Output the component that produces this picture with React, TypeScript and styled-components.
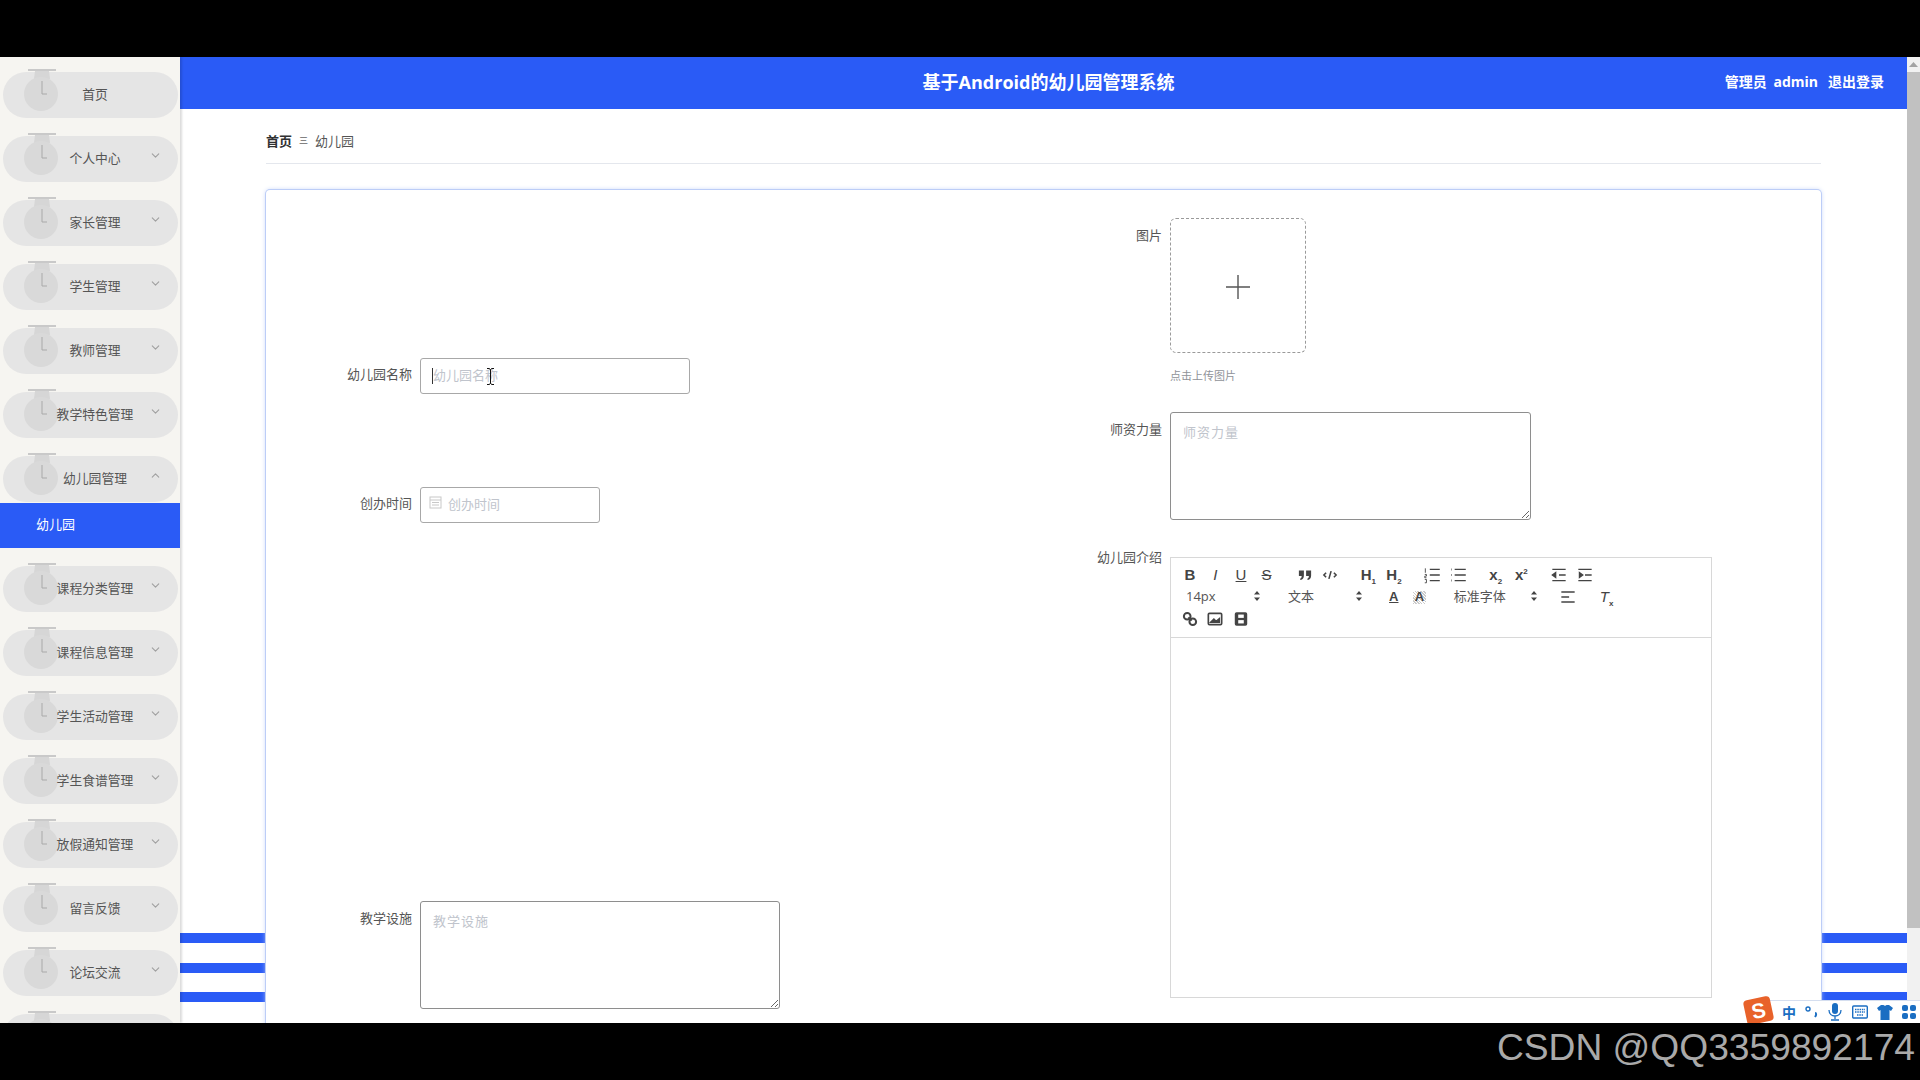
import React from 'react'
import styled, { createGlobalStyle } from 'styled-components'
import { ChevronDown, ChevronUp } from 'lucide-react'

const BLUE = '#2a5bf6'
const FONT = '"Open Sans", "Noto Sans CJK SC", sans-serif'

const menus = [
  { id: 'home', name: '首页', plain: true },
  { id: 'center', name: '个人中心' },
  { id: 'parent', name: '家长管理' },
  { id: 'student', name: '学生管理' },
  { id: 'teacher', name: '教师管理' },
  { id: 'feature', name: '教学特色管理' },
  { id: 'school', name: '幼儿园管理', open: true, sub: '幼儿园' },
  { id: 'category', name: '课程分类管理' },
  { id: 'course', name: '课程信息管理' },
  { id: 'activity', name: '学生活动管理' },
  { id: 'recipe', name: '学生食谱管理' },
  { id: 'holiday', name: '放假通知管理' },
  { id: 'message', name: '留言反馈' },
  { id: 'forum', name: '论坛交流' },
  { id: 'last', name: '', plain: true },
]

function MenuIcon() {
  return (
    <PillIcon width="36" height="46" viewBox="0 0 36 46">
      <rect x="4" y="1" width="28" height="2" fill="#c9c9c9" />
      <path d="M11 3h14l1 8H10z" fill="#d6d6d6" />
      <circle cx="17" cy="26" r="17" fill="#d9d9d9" />
      <path d="M18 13v13h5" fill="none" stroke="#a9a9a9" strokeWidth="1" />
    </PillIcon>
  )
}

function Arrows() {
  return (
    <svg width="6" height="10" viewBox="0 0 6 10">
      <path d="M3 0l3 3.600H0zM3 10L0 6.400h6z" fill="#444" />
    </svg>
  )
}

function ToolSvg({ children }: { children: React.ReactNode }) {
  return (
    <ToolIcon width="20" height="20" viewBox="0 0 18 18">
      {children}
    </ToolIcon>
  )
}

const Quote = () => (
  <ToolSvg>
    <path d="M3.500 5H8v4.500C8 12 7 13 5 13.600l-.5-1C5.600 12 6 11.300 6 10H3.500zM10 5h4.500v4.500c0 2.500-1 3.500-3 4.100l-.5-1c1.100-.6 1.500-1.300 1.500-2.600H10z" fill="#444" stroke="none" />
  </ToolSvg>
)
const Code = () => (
  <ToolSvg>
    <path d="M5.500 7L3.500 9l2 2M12.500 7l2 2-2 2M10 5.500L8 12.500" strokeWidth="1.400" />
  </ToolSvg>
)
const Ordered = () => (
  <ToolSvg>
    <path d="M7 4h9M7 9h9M7 14h9" />
    <path d="M3 3v4M2.500 8.500h1.500v1.500H2.500v1.500H4M2.500 13h1.500v3H2.500" strokeWidth="0.800" />
  </ToolSvg>
)
const Bullet = () => (
  <ToolSvg>
    <path d="M6 4h10M6 9h10M6 14h10" />
    <path d="M3 4h.5M3 9h.5M3 14h.5" strokeWidth="1.800" />
  </ToolSvg>
)
const Outdent = () => (
  <ToolSvg>
    <path d="M3 4h12M9 9h6M3 14h12" />
    <path d="M3 9l3-2.200v4.400z" fill="#444" />
  </ToolSvg>
)
const Indent = () => (
  <ToolSvg>
    <path d="M3 4h12M9 9h6M3 14h12" />
    <path d="M7 9L4 6.800v4.400z" fill="#444" />
  </ToolSvg>
)
const Align = () => (
  <ToolSvg>
    <path d="M3 4.500h12M3 9h7M3 13.500h12" strokeWidth="1.500" />
  </ToolSvg>
)
const Link = () => (
  <ToolSvg>
    <circle cx="6.500" cy="6.500" r="3" strokeWidth="1.800" />
    <circle cx="11.500" cy="11.500" r="3" strokeWidth="1.800" />
    <path d="M7.500 7.500l3 3" strokeWidth="1.800" />
  </ToolSvg>
)
const Picture = () => (
  <ToolSvg>
    <rect x="3" y="4" width="12" height="10" rx="1" strokeWidth="1.500" />
    <path d="M5 12l3-3 2 2 3-2.500V12z" fill="#444" />
  </ToolSvg>
)
const Video = () => (
  <ToolSvg>
    <rect x="4" y="3.500" width="10" height="11" rx="1" fill="#444" />
    <rect x="6.500" y="5" width="5" height="3" fill="#fff" stroke="none" />
    <rect x="6.500" y="10" width="5" height="3" fill="#fff" stroke="none" />
  </ToolSvg>
)

function Editor() {
  return (
    <EditorBox>
      <Toolbar>
        <ToolGroup>
          <ToolLetter $bold>B</ToolLetter>
          <ToolLetter $italic>I</ToolLetter>
          <ToolLetter $under>U</ToolLetter>
          <ToolLetter $strike>S</ToolLetter>
        </ToolGroup>
        <ToolGroup>
          <ToolButton><Quote /></ToolButton>
          <ToolButton><Code /></ToolButton>
        </ToolGroup>
        <ToolGroup>
          <ToolLetter $bold>H<sub>1</sub></ToolLetter>
          <ToolLetter $bold>H<sub>2</sub></ToolLetter>
        </ToolGroup>
        <ToolGroup>
          <ToolButton><Ordered /></ToolButton>
          <ToolButton><Bullet /></ToolButton>
        </ToolGroup>
        <ToolGroup>
          <ToolLetter $bold>x<sub>2</sub></ToolLetter>
          <ToolLetter $bold>x<sup>2</sup></ToolLetter>
        </ToolGroup>
        <ToolGroup>
          <ToolButton><Outdent /></ToolButton>
          <ToolButton><Indent /></ToolButton>
        </ToolGroup>
        <RowBreak />
        <ToolSelect $width={93}>14px<Arrows /></ToolSelect>
        <ToolSelect $width={93}>文本<Arrows /></ToolSelect>
        <ToolGroup>
          <ToolLetter $small $under>A</ToolLetter>
          <ToolLetter $small $hatch>A</ToolLetter>
        </ToolGroup>
        <ToolSelect $width={102}>标准字体<Arrows /></ToolSelect>
        <ToolGroup>
          <ToolButton><Align /></ToolButton>
        </ToolGroup>
        <ToolGroup>
          <ToolLetter $clean>T<sub>x</sub></ToolLetter>
        </ToolGroup>
        <RowBreak />
        <ToolGroup>
          <ToolButton><Link /></ToolButton>
          <ToolButton><Picture /></ToolButton>
          <ToolButton><Video /></ToolButton>
        </ToolGroup>
      </Toolbar>
    </EditorBox>
  )
}

export default function App() {
  return (
    <>
      <GlobalStyle />
      <Frame>
        <BlackBar />
        <Body>
          <Sidebar>
            {menus.map((menu) => (
              <React.Fragment key={menu.id}>
                <Pill $open={menu.open}>
                  <MenuIcon />
                  <PillText>{menu.name}</PillText>
                  {!menu.plain && <PillArrow>{menu.open ? <ChevronUp size={13} /> : <ChevronDown size={13} />}</PillArrow>}
                </Pill>
                {menu.sub && <SubItem>{menu.sub}</SubItem>}
              </React.Fragment>
            ))}
          </Sidebar>
          <Main>
            <Header>
              <Title>基于Android的幼儿园管理系统</Title>
              <HeaderRight>
                <span>管理员 admin</span>
                <span>退出登录</span>
              </HeaderRight>
            </Header>
            <Content>
              <Breadcrumb>
                <strong>首页</strong>
                <Separator>三</Separator>
                <span>幼儿园</span>
              </Breadcrumb>
              <Card>
                <Column>
                  <Row $top={168}>
                    <Label $center>幼儿园名称</Label>
                    <InputWrap>
                      <TextInput $width={270} placeholder="幼儿园名称" />
                      <Caret />
                      <IBeam width="9" height="17" viewBox="0 0 9 17">
                        <path d="M1 .5h2.500L4.500 2 5.500.5H8M4.500 2v13M1 16.500h2.500L4.500 15l1 1.500H8" fill="none" stroke="#111" />
                      </IBeam>
                    </InputWrap>
                  </Row>
                  <Row $top={93}>
                    <Label $center>创办时间</Label>
                    <InputWrap>
                      <DateInput placeholder="创办时间" />
                      <CalendarIcon width="13" height="13" viewBox="0 0 13 13">
                        <rect x="1" y="1" width="11" height="11" fill="none" stroke="#c8c8c8" />
                        <path d="M1 4h11M3 6.500h7M3 9h7" stroke="#c8c8c8" />
                      </CalendarIcon>
                    </InputWrap>
                  </Row>
                  <Row $top={378}>
                    <Label>教学设施</Label>
                    <TextArea $width={360} placeholder="教学设施" />
                  </Row>
                </Column>
                <Column>
                  <Row $top={28}>
                    <Label>图片</Label>
                    <div>
                      <Upload>
                        <svg width="24" height="24" viewBox="0 0 24 24">
                          <path d="M0 12h24M12 0v24" stroke="#555" strokeWidth="1.400" />
                        </svg>
                      </Upload>
                      <UploadHint>点击上传图片</UploadHint>
                    </div>
                  </Row>
                  <Row $top={27}>
                    <Label>师资力量</Label>
                    <TextArea $width={361} placeholder="师资力量" />
                  </Row>
                  <Row $top={37}>
                    <Label $raised>幼儿园介绍</Label>
                    <Editor />
                  </Row>
                </Column>
              </Card>
            </Content>
          </Main>
          <Scrollbar>
            <ScrollButton>
              <svg width="9" height="5" viewBox="0 0 9 5">
                <path d="M4.500 0L9 5H0z" fill="#a3a3a3" />
              </svg>
            </ScrollButton>
            <ScrollThumb />
          </Scrollbar>
          <ImeBar>
            <ImeLogo>S</ImeLogo>
            <ImeZh>中</ImeZh>
            <svg width="14" height="14" viewBox="0 0 14 14">
              <circle cx="3" cy="4" r="2" fill="none" stroke="#1b6ec2" strokeWidth="1.400" />
              <path d="M10 8c1.500 0 1.500 2 0 4" fill="none" stroke="#1b6ec2" strokeWidth="2" />
            </svg>
            <svg width="14" height="18" viewBox="0 0 14 18">
              <rect x="4" y="0" width="6" height="11" rx="3" fill="#1b6ec2" />
              <path d="M1 7c0 8 12 8 12 0M7 13v3M3 17h8" fill="none" stroke="#1b6ec2" strokeWidth="1.300" />
            </svg>
            <svg width="16" height="14" viewBox="0 0 16 14">
              <rect x="0.700" y="1" width="14.600" height="12" rx="1" fill="none" stroke="#1b6ec2" strokeWidth="1.400" />
              <path d="M3 4.500h10M3 7h10M5 10h6" stroke="#1b6ec2" strokeWidth="1.400" strokeDasharray="1.500 0.800" />
            </svg>
            <svg width="16" height="15" viewBox="0 0 16 15">
              <path d="M4 0h2.500c.5 1 2.500 1 3 0H12l4 3-2 3-1.500-1v10h-9V5L2 6 0 3z" fill="#1b6ec2" />
            </svg>
            <svg width="14" height="14" viewBox="0 0 14 14">
              <rect x="0" y="0" width="6" height="6" rx="2" fill="#1b6ec2" />
              <rect x="8" y="0" width="6" height="6" rx="2" fill="#1b6ec2" />
              <rect x="0" y="8" width="6" height="6" rx="2" fill="#1b6ec2" />
              <rect x="8" y="8" width="6" height="6" rx="2" fill="#1b6ec2" />
            </svg>
          </ImeBar>
        </Body>
        <BottomBar>CSDN @QQ3359892174</BottomBar>
      </Frame>
    </>
  )
}

const GlobalStyle = createGlobalStyle`
  html, body {
    margin: 0;
    padding: 0;
    overflow: hidden;
    background: #000;
  }
  * {
    box-sizing: border-box;
  }
`

const Frame = styled.div`
  width: 1920px;
  height: 1080px;
  display: flex;
  flex-direction: column;
  font-family: ${FONT};
  font-size: 13px;
  color: #555;
`

const BlackBar = styled.div`
  height: 57px;
  flex: none;
  background: #000;
`

const BottomBar = styled.div`
  height: 57px;
  flex: none;
  background: #000;
  color: #a9a9a9;
  font-family: 'Liberation Sans', sans-serif;
  font-size: 37.200px;
  line-height: 48px;
  text-align: right;
  padding-right: 5px;
`

const Body = styled.div`
  position: relative;
  height: 966px;
  flex: none;
  display: flex;
  overflow: hidden;
  background: #fff;
`

const Sidebar = styled.nav`
  position: relative;
  z-index: 2;
  width: 180px;
  flex: none;
  padding: 15px 2px 0 3px;
  background: #f6f5f1;
  box-shadow: 2px 0 2px rgba(0, 0, 0, 0.14);
`

const Pill = styled.div<{ $open?: boolean }>`
  position: relative;
  width: 175px;
  height: 46px;
  margin-bottom: ${(p) => (p.$open ? '1px' : '18px')};
  padding: 0 0 3px 9px;
  display: flex;
  align-items: center;
  justify-content: center;
  border-radius: 23px;
  background: #e5e5e5;
  color: #555;
  font-size: 12.800px;
`

const PillIcon = styled.svg`
  position: absolute;
  left: 21px;
  top: -4px;
`

const PillText = styled.span`
  position: relative;
`

const PillArrow = styled.span`
  position: absolute;
  right: 16px;
  top: 13px;
  display: flex;
  color: #a0a0a0;
`

const SubItem = styled.div`
  height: 45px;
  margin: 0 -2px 18px -3px;
  padding-left: 36px;
  line-height: 43px;
  background: ${BLUE};
  color: #fff;
`

const Main = styled.main`
  flex: 1;
  min-width: 0;
  display: flex;
  flex-direction: column;
`

const Header = styled.header`
  position: relative;
  height: 52px;
  flex: none;
  display: flex;
  align-items: center;
  justify-content: center;
  padding: 0 0 4px 10px;
  background: ${BLUE};
  color: #fff;
`

const Title = styled.h1`
  margin: 0;
  font-size: 18px;
  font-weight: 700;
`

const HeaderRight = styled.div`
  position: absolute;
  right: 23px;
  top: 0;
  line-height: 50px;
  display: flex;
  gap: 10px;
  font-size: 14px;
  font-weight: 700;
  word-spacing: 3px;
`

const Content = styled.section`
  flex: 1;
  padding: 0 86px;
  background:
    linear-gradient(${BLUE}, ${BLUE}) no-repeat 0 824px / 100% 10px,
    linear-gradient(${BLUE}, ${BLUE}) no-repeat 0 854px / 100% 10px,
    linear-gradient(${BLUE}, ${BLUE}) no-repeat 0 883px / 100% 10px,
    #fff;
`

const Breadcrumb = styled.div`
  height: 55px;
  display: flex;
  align-items: center;
  padding-top: 9px;
  border-bottom: 1px solid #e4e7ed;
  color: #555;
  strong {
    color: #303133;
    font-weight: 700;
  }
`

const Separator = styled.i`
  margin: 0 7px;
  font-style: normal;
  font-size: 9px;
  color: #666;
`

const Card = styled.div`
  margin-top: 26px;
  height: 900px;
  display: grid;
  grid-template-columns: 750px 1fr;
  background: #fff;
  border-radius: 4px;
  box-shadow: 0 0 0 1px #bccdf7, 0 0 5px #bccdf7;
`

const Column = styled.div`
  display: flex;
  flex-direction: column;
`

const Row = styled.div<{ $top: number }>`
  display: flex;
  gap: 8px;
  margin-top: ${(p) => p.$top}px;
`

const Label = styled.label<{ $center?: boolean; $raised?: boolean }>`
  width: 146px;
  flex: none;
  margin-top: ${(p) => (p.$raised ? '-9px' : '0')};
  padding-top: ${(p) => (p.$raised ? '0' : p.$center ? '7px' : '8px')};
  text-align: right;
  line-height: 18px;
  color: #555;
`

const InputWrap = styled.div`
  position: relative;
`

const TextInput = styled.input<{ $width: number }>`
  display: block;
  width: ${(p) => p.$width}px;
  height: 36px;
  padding: 0 12px 3px;
  border: 1px solid #a8a8a8;
  border-radius: 3px;
  outline: none;
  background: #fff;
  font-family: ${FONT};
  font-size: 13px;
  &::placeholder {
    color: #c0c4cc;
  }
`

const DateInput = styled(TextInput).attrs({ $width: 180 })`
  padding-left: 27px;
`

const Caret = styled.span`
  position: absolute;
  left: 12px;
  top: 10px;
  width: 1px;
  height: 16px;
  background: #333;
`

const IBeam = styled.svg`
  position: absolute;
  left: 66px;
  top: 10px;
`

const CalendarIcon = styled.svg`
  position: absolute;
  left: 9px;
  top: 9px;
`

const TextArea = styled.textarea<{ $width: number }>`
  display: block;
  width: ${(p) => p.$width}px;
  height: 108px;
  padding: 9px 12px;
  border: 1px solid #8e8e8e;
  border-radius: 3px;
  outline: none;
  background: #fff;
  font-family: ${FONT};
  font-size: 13px;
  letter-spacing: 1px;
  &::placeholder {
    color: #c0c4cc;
  }
`

const Upload = styled.div`
  width: 136px;
  height: 135px;
  padding-top: 2px;
  display: flex;
  align-items: center;
  justify-content: center;
  border: 1px dashed #9a9a9a;
  border-radius: 6px;
`

const UploadHint = styled.div`
  margin-top: 14px;
  font-size: 11px;
  line-height: 18px;
  color: #909399;
`

const EditorBox = styled.div`
  width: 542px;
  height: 441px;
  border: 1px solid #d8d8d8;
`

const Toolbar = styled.div`
  height: 80px;
  padding: 6px 0 0 6px;
  display: flex;
  flex-wrap: wrap;
  align-content: flex-start;
  border-bottom: 1px solid #d8d8d8;
`

const RowBreak = styled.div`
  flex-basis: 100%;
  height: 0;
`

const ToolGroup = styled.div`
  display: flex;
  margin-right: 12.500px;
`

const ToolButton = styled.span`
  width: 25.600px;
  height: 22px;
  display: flex;
  align-items: center;
  justify-content: center;
`

const ToolIcon = styled.svg`
  fill: none;
  stroke: #444;
  stroke-width: 1.200;
`

const ToolLetter = styled.span<{
  $bold?: boolean
  $italic?: boolean
  $under?: boolean
  $strike?: boolean
  $small?: boolean
  $hatch?: boolean
  $clean?: boolean
}>`
  display: block;
  width: 25.600px;
  height: 22px;
  line-height: 22px;
  text-align: center;
  font-family: 'Liberation Sans', sans-serif;
  font-size: ${(p) => (p.$small ? '13px' : '15px')};
  font-weight: ${(p) => (p.$small || p.$bold ? 700 : 400)};
  font-style: ${(p) => (p.$italic || p.$clean ? 'italic' : 'normal')};
  color: #444;
  text-decoration: ${(p) => (p.$under ? 'underline' : p.$strike ? 'line-through' : 'none')};
  background: ${(p) =>
    p.$hatch
      ? 'repeating-linear-gradient(45deg, #ccc 0 1px, #fff 1px 2px) center / 13px 13px no-repeat'
      : 'none'};
  sub,
  sup {
    font-size: 8px;
    font-style: normal;
    font-weight: 700;
    line-height: 0;
  }
`

const ToolSelect = styled.span<{ $width: number }>`
  width: ${(p) => p.$width}px;
  height: 22px;
  margin-right: 9px;
  padding: 0 10px 3px 9px;
  display: flex;
  align-items: center;
  justify-content: space-between;
  font-size: 13px;
  color: #555;
`

const Scrollbar = styled.aside`
  width: 13px;
  flex: none;
  background: #f1f1f1;
`

const ScrollButton = styled.div`
  height: 15px;
  display: flex;
  align-items: center;
  justify-content: center;
`

const ScrollThumb = styled.div`
  height: 856px;
  background: #c1c1c1;
`

const ImeBar = styled.div`
  position: absolute;
  z-index: 3;
  right: 0;
  bottom: 0;
  width: 150px;
  height: 23px;
  padding: 0 4px 0 12px;
  display: flex;
  align-items: center;
  justify-content: space-between;
  background: #fff;
  border-top: 1px solid #d5deef;
`

const ImeLogo = styled.span`
  position: absolute;
  left: -25px;
  bottom: 0;
  width: 27px;
  height: 25px;
  display: flex;
  align-items: center;
  justify-content: center;
  transform: rotate(-12deg);
  border-radius: 4px;
  background: #e8622a;
  color: #fff;
  font-family: 'Liberation Sans', sans-serif;
  font-size: 21px;
  font-weight: 700;
  line-height: 1;
`

const ImeZh = styled.span`
  color: #1b6ec2;
  font-size: 14px;
  font-weight: 700;
`
